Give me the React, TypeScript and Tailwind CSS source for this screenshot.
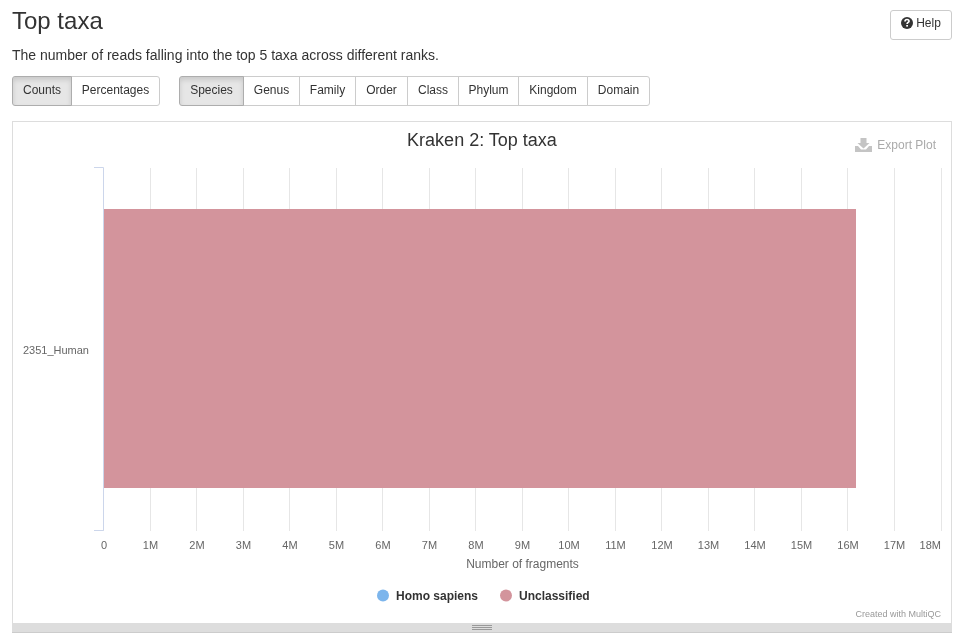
const font = "font-['Liberation_Sans',Arial,sans-serif]"

const modes = [
  { label: "Counts", width: "w-[60px]" },
  { label: "Percentages", width: "w-[89px]" },
]
const ranks = [
  { label: "Species", width: "w-[65px]" },
  { label: "Genus", width: "w-[57px]" },
  { label: "Family", width: "w-[57px]" },
  { label: "Order", width: "w-[53px]" },
  { label: "Class", width: "w-[52px]" },
  { label: "Phylum", width: "w-[61px]" },
  { label: "Kingdom", width: "w-[70px]" },
  { label: "Domain", width: "w-[63px]" },
]
const ticks = Array.from({ length: 19 }, (_, i) => i)

// chart coordinates are relative to the plot box (outer edge at x=12, y=121)
const gridX = (i: number) => Math.round(90 + i * 46.53) + 0.5
const labelX = (i: number) => 91 + i * 46.5

function BtnGroup({ items }: { items: { label: string; width: string }[] }) {
  return (
    <div className="flex">
      {items.map((item, i) => (
        <button
          key={item.label}
          className={`h-[30px] ${item.width} pb-[2px] text-xs leading-[18px] text-[#333] border ${i > 0 ? "-ml-px" : ""} ${i === 0 ? "rounded-l-[3px] bg-[#e6e6e6] border-[#adadad] shadow-[inset_0_3px_5px_rgba(0,0,0,0.125)] relative z-10" : "bg-white border-[#ccc]"} ${i === items.length - 1 ? "rounded-r-[3px]" : ""}`}
        >
          {item.label}
        </button>
      ))}
    </div>
  )
}

function Chart() {
  return (
    <svg width="938" height="501" className="block">
      {ticks.map((i) => (
        <line key={i} x1={gridX(i)} x2={gridX(i)} y1="46" y2="409" stroke="#e6e6e6" />
      ))}
      <rect x="91" y="87" width="752" height="279" fill="#d3949c" />
      <path d="M81 45.5H90.5V408.5H81" fill="none" stroke="#ccd6eb" />
      <text x="76" y="232" textAnchor="end" fontSize="11" fill="#666">2351_Human</text>
      {ticks.map((i) => (
        <text key={i} x={i === 18 ? 928 : labelX(i)} y="427" textAnchor={i === 18 ? "end" : "middle"} fontSize="11" fill="#666">
          {i === 0 ? "0" : `${i}M`}
        </text>
      ))}
      <text x="509.5" y="446" textAnchor="middle" fontSize="12" fill="#666">Number of fragments</text>
      <circle cx="370" cy="473.5" r="6" fill="#7cb5ec" />
      <text x="383" y="478" fontSize="12" fontWeight="700" fill="#333">Homo sapiens</text>
      <circle cx="493" cy="473.5" r="6" fill="#d3949c" />
      <text x="506" y="478" fontSize="12" fontWeight="700" fill="#333">Unclassified</text>
      <text x="928" y="495" textAnchor="end" fontSize="9" fill="#999">Created with MultiQC</text>
    </svg>
  )
}

export default function App() {
  return (
    <div className={`${font} w-[970px] h-[643px] overflow-hidden will-change-transform pl-3 pr-[18px] pt-[10px] text-[#333]`}>
      <div className="flex items-start justify-between">
        <h3 className="text-2xl leading-[22px]">Top taxa</h3>
        <button className="w-[62px] h-[30px] rounded-[3px] border border-[#ccc] bg-white text-xs flex items-start justify-center pt-[5px] gap-[3px] leading-[14px]">
          <svg width="12" height="12" viewBox="0 0 12 12" className="mt-px">
            <circle cx="6" cy="6" r="6" fill="#333" />
            <path d="M4 4.6C4 3.3 5 2.5 6 2.5C7.2 2.5 8 3.3 8 4.2C8 5.4 6.1 5.5 6.1 7" fill="none" stroke="#fff" strokeWidth="1.7" />
            <rect x="5.2" y="8" width="1.8" height="1.6" fill="#fff" />
          </svg>
          Help
        </button>
      </div>
      <p className="text-sm leading-5 mt-[5px]">The number of reads falling into the top 5 taxa across different ranks.</p>
      <div className="flex gap-[19px] mt-[11px]">
        <BtnGroup items={modes} />
        <BtnGroup items={ranks} />
      </div>
      <div className="relative mt-[15px] w-[940px] h-[512px] border border-[#ddd] border-b-0 flex flex-col">
        <h4 className="text-lg leading-5 text-center text-[#333] absolute left-0 right-0 top-[8px]">Kraken 2: Top taxa</h4>
        <div className="absolute right-[15px] top-[15px] flex items-center gap-[5px] text-xs text-[#aaa] z-10">
          <svg width="17" height="14" viewBox="0 0 17 14" className="-mt-px">
            <path d="M5.5 0H11.5V5H14.5L8.5 10.5L2.5 5H5.5Z" fill="#c4c4c4" />
            <path d="M0 8H3L6 11.5H11L14 8H17V14H0Z" fill="#c4c4c4" />
          </svg>
          Export Plot
        </div>
        <Chart />
        <div className="h-[10px] bg-[#ddd] border-b border-[#ccc] flex flex-col items-center justify-center gap-px -mx-px">
          <div className="w-5 h-px bg-[#999]" />
          <div className="w-5 h-px bg-[#999]" />
          <div className="w-5 h-px bg-[#999]" />
        </div>
      </div>
    </div>
  )
}
